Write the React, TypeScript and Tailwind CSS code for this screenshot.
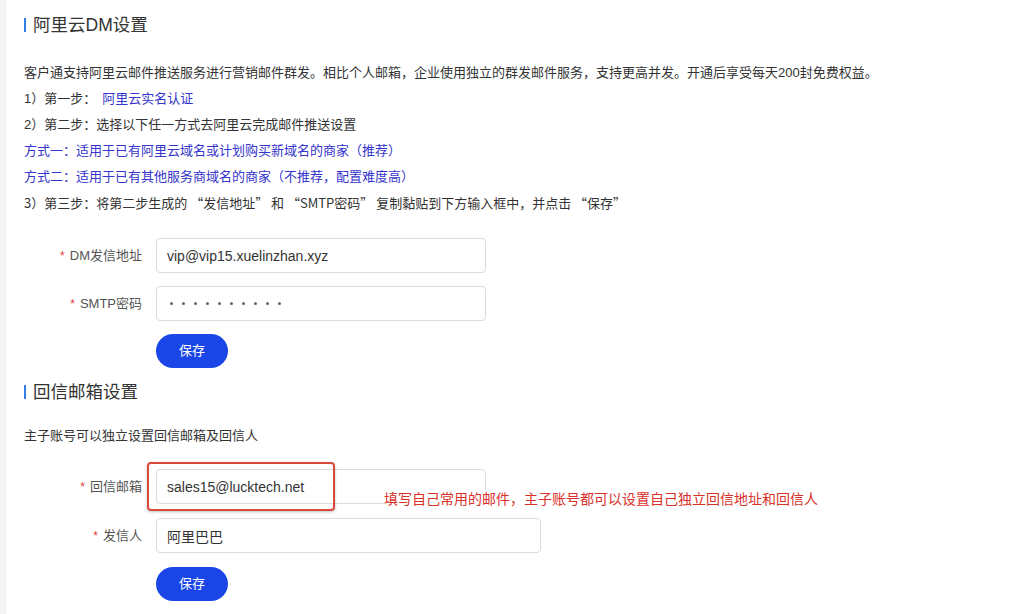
const font = {
  fontFamily: '"Liberation Sans", "Noto Sans CJK SC", sans-serif',
};

const cjkFont = {
  fontFamily: '"Noto Sans CJK SC", sans-serif',
};

const Heading = ({ children }: { children: string }) => (
  <div className="flex items-center h-[22px] gap-[7px]">
    <span className="w-[2px] h-[14px] bg-[#2f7fe6]" />
    <span className="text-[17.5px] text-[#333] leading-[22px]">{children}</span>
  </div>
);

const Label = ({ text }: { text: string }) => (
  <div className="w-[132px] shrink-0 pr-[14px] text-right text-[13px] text-[#555]">
    <span className="text-[#e4393c] text-[12px] mr-[5px]">*</span>
    {text}
  </div>
);

const Field = ({ value, wide }: { value: string; wide?: boolean }) => (
  <input
    readOnly
    value={value}
    className={`${wide ? "w-[385px]" : "w-[330px]"} h-[35px] border border-[#dcdcdc] rounded-[4px] px-[10px] text-[14px] text-[#333] outline-none bg-white`}
    style={font}
  />
);

const SaveButton = () => (
  <div className="pl-[132px]">
    <button className="w-[72px] h-[34px] rounded-full bg-[#1a46e8] text-white text-[13px]">
      保存
    </button>
  </div>
);

export default function App() {
  return (
    <div className="flex min-h-[614px] bg-white" style={font}>
      <div className="w-[7px] shrink-0 bg-[#f4f4f4]" />
      <div className="flex-1 pl-[17px] pt-[14px]">
        <Heading>阿里云DM设置</Heading>

        <div className="mt-[24px] text-[13px] leading-[26px] text-[#333]">
          <p>
            客户通支持阿里云邮件推送服务进行营销邮件群发。相比个人邮箱，企业使用独立的群发邮件服务，支持更高并发。开通后享受每天200封免费权益。
          </p>
          <p>
            1）第一步：<span className="ml-[6px] text-[#3535cc]">阿里云实名认证</span>
          </p>
          <p>2）第二步：选择以下任一方式去阿里云完成邮件推送设置</p>
          <p className="text-[#3535cc]">方式一：适用于已有阿里云域名或计划购买新域名的商家（推荐）</p>
          <p className="text-[#3535cc]">方式二：适用于已有其他服务商域名的商家（不推荐，配置难度高）</p>
          <p style={cjkFont}>
            3）第三步：将第二步生成的 “发信地址” 和 “SMTP密码” 复制黏贴到下方输入框中，并点击 “保存”
          </p>
        </div>

        <div className="mt-[22px] flex flex-col gap-[13px]">
          <div className="flex items-center">
            <Label text="DM发信地址" />
            <Field value="vip@vip15.xuelinzhan.xyz" />
          </div>
          <div className="flex items-center">
            <Label text="SMTP密码" />
            <div className="w-[330px] h-[35px] border border-[#dcdcdc] rounded-[4px] pl-[13px] flex items-center gap-[9px]">
              {Array.from({ length: 10 }).map((_, i) => (
                <span key={i} className="w-[3px] h-[3px] rounded-full bg-[#666]" />
              ))}
            </div>
          </div>
          <SaveButton />
        </div>

        <div className="mt-[13px]">
          <Heading>回信邮箱设置</Heading>
        </div>
        <p className="mt-[20px] text-[13px] leading-[26px] text-[#333]">主子账号可以独立设置回信邮箱及回信人</p>

        <div className="mt-[20px] flex flex-col gap-[14px]">
          <div className="flex items-center">
            <Label text="回信邮箱" />
            <div className="relative">
              <Field value="sales15@lucktech.net" />
              <div className="absolute left-[-9px] top-[-7px] w-[188px] h-[49px] border-2 border-[#d8483b] rounded-[4px] shadow-[0_1px_3px_rgba(0,0,0,0.25)]" />
              <div className="absolute left-[228px] top-[21px] whitespace-nowrap bg-white text-[14px] leading-[18px] text-[#d9312a]">
                填写自己常用的邮件，主子账号都可以设置自己独立回信地址和回信人
              </div>
            </div>
          </div>
          <div className="flex items-center">
            <Label text="发信人" />
            <Field value="阿里巴巴" wide />
          </div>
          <SaveButton />
        </div>
      </div>
    </div>
  );
}
